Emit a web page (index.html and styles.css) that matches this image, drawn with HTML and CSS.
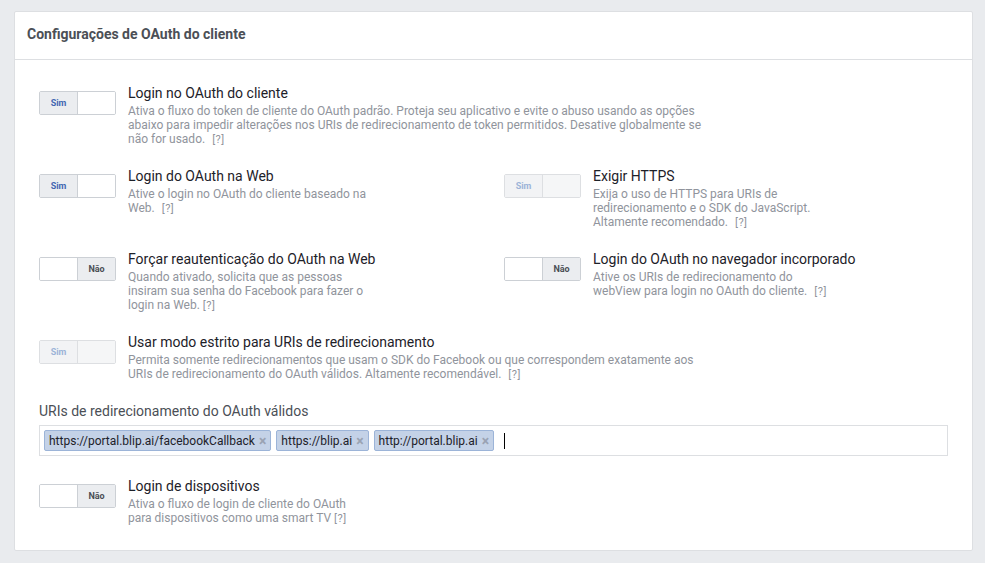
FILE: index.html
```html
<!DOCTYPE html>
<html lang="pt-BR">
<head>
<meta charset="utf-8">
<title>Configurações de OAuth do cliente</title>
<link rel="stylesheet" href="styles.css">
</head>
<body>
<div class="panel">
  <div class="panel-header">Configurações de OAuth do cliente</div>
  <div class="panel-body">
    <div class="row">
      <div class="setting wide">
        <div class="toggle"><span class="part on">Sim</span><span class="part blank"></span></div>
        <div class="info">
          <div class="title">Login no OAuth do cliente</div>
          <div class="desc">Ativa o fluxo do token de cliente do OAuth padrão. Proteja seu aplicativo e evite o abuso usando as opções abaixo para impedir alterações nos URIs de redirecionamento de token permitidos. Desative globalmente se não for usado. <span class="help">[?]</span></div>
        </div>
      </div>
    </div>
    <div class="row">
      <div class="setting">
        <div class="toggle"><span class="part on">Sim</span><span class="part blank"></span></div>
        <div class="info">
          <div class="title">Login do OAuth na Web</div>
          <div class="desc">Ative o login no OAuth do cliente baseado na Web. <span class="help">[?]</span></div>
        </div>
      </div>
      <div class="setting">
        <div class="toggle disabled"><span class="part on">Sim</span><span class="part blank"></span></div>
        <div class="info">
          <div class="title">Exigir HTTPS</div>
          <div class="desc">Exija o uso de HTTPS para URIs de redirecionamento e o SDK do JavaScript. Altamente recomendado. <span class="help">[?]</span></div>
        </div>
      </div>
    </div>
    <div class="row">
      <div class="setting">
        <div class="toggle"><span class="part blank"></span><span class="part off">Não</span></div>
        <div class="info">
          <div class="title">Forçar reautenticação do OAuth na Web</div>
          <div class="desc">Quando ativado, solicita que as pessoas insiram sua senha do Facebook para fazer o login na Web. <span class="help tight">[?]</span></div>
        </div>
      </div>
      <div class="setting">
        <div class="toggle"><span class="part blank"></span><span class="part off">Não</span></div>
        <div class="info">
          <div class="title">Login do OAuth no navegador incorporado</div>
          <div class="desc">Ative os URIs de redirecionamento do webView para login no OAuth do cliente. <span class="help">[?]</span></div>
        </div>
      </div>
    </div>
    <div class="row">
      <div class="setting wide">
        <div class="toggle disabled"><span class="part on">Sim</span><span class="part blank"></span></div>
        <div class="info">
          <div class="title">Usar modo estrito para URIs de redirecionamento</div>
          <div class="desc">Permita somente redirecionamentos que usam o SDK do Facebook ou que correspondem exatamente aos URIs de redirecionamento do OAuth válidos. Altamente recomendável. <span class="help">[?]</span></div>
        </div>
      </div>
    </div>
    <div class="uris">
      <div class="uris-label">URIs de redirecionamento do OAuth válidos</div>
      <div class="token-input">
        <span class="token">https://portal.blip.ai/facebookCallback<span class="x">×</span></span>
        <span class="token">https://blip.ai<span class="x">×</span></span>
        <span class="token">http://portal.blip.ai<span class="x">×</span></span>
        <span class="caret"></span>
      </div>
    </div>
    <div class="row last">
      <div class="setting">
        <div class="toggle"><span class="part blank"></span><span class="part off">Não</span></div>
        <div class="info">
          <div class="title">Login de dispositivos</div>
          <div class="desc">Ativa o fluxo de login de cliente do OAuth para dispositivos como uma smart TV <span class="help tight">[?]</span></div>
        </div>
      </div>
    </div>
  </div>
</div>
</body>
</html>
```
FILE: styles.css
```css
html, body {
  margin: 0;
  padding: 0;
  background: #e9ebee;
  font-family: Roboto, "Liberation Sans", sans-serif;
}

body {
  padding: 11px 12px 0 14px;
}

.panel {
  background: #fff;
  border: 1px solid #dddfe2;
  border-radius: 2px;
}

.panel-header {
  padding: 13px 12px 16px 12px;
  line-height: 18px;
  border-bottom: 1px solid #dddfe2;
  font-size: 14px;
  font-weight: 700;
  color: #4b4f56;
}

.panel-body {
  padding: 24px 24px 24px 24px;
}

.row {
  display: grid;
  grid-template-columns: 465px 1fr;
  margin-bottom: 20px;
}

.row.last {
  margin-bottom: 0;
}

.setting {
  display: flex;
  gap: 12px;
}

.setting.wide {
  grid-column: 1 / span 2;
}

.toggle {
  margin-top: 7px;
  width: 77px;
  height: 24px;
  box-sizing: border-box;
  border: 1px solid #ccd0d5;
  border-radius: 2px;
  display: flex;
  flex: none;
  overflow: hidden;
}

.part {
  flex: 1;
  display: flex;
  align-items: center;
  justify-content: center;
  font-size: 9px;
  font-weight: 700;
}

.part.on {
  background: #ebedf0;
  color: #4267b2;
  border-right: 1px solid #ccd0d5;
}

.part.off {
  background: #ebedf0;
  color: #4b4f56;
  border-left: 1px solid #ccd0d5;
}

.part.blank {
  background: #fff;
}

.toggle.disabled {
  border-color: #dddfe2;
}

.toggle.disabled .part.on {
  background: #f2f3f5;
  color: #9cb4d8;
  border-right-color: #dddfe2;
}

.toggle.disabled .part.blank {
  background: #f5f6f7;
}

.title {
  font-size: 14px;
  line-height: 18px;
  color: #1d2129;
  white-space: nowrap;
}

.desc {
  margin-top: 2px;
  font-size: 12px;
  line-height: 14px;
  color: #90949c;
  max-width: 240px;
}

.wide .desc {
  max-width: 585px;
}

.help {
  font-size: 11px;
  letter-spacing: 0.5px;
  margin-left: 4px;
}

.help.tight {
  margin-left: 0;
}

.uris {
  margin-top: 19px;
  margin-bottom: 21px;
}

.uris-label {
  font-size: 14px;
  line-height: 18px;
  color: #4b4f56;
  margin-bottom: 5px;
}

.token-input {
  border: 1px solid #dddfe2;
  height: 31px;
  box-sizing: border-box;
  padding: 4px;
  display: flex;
  align-items: center;
  gap: 5px;
}

.token {
  height: 21px;
  box-sizing: border-box;
  display: inline-flex;
  align-items: center;
  padding: 0 4px 0 4px;
  background: #c4d2e7;
  border: 1px solid #9cb4d8;
  border-radius: 2px;
  font-size: 12px;
  color: #1d2129;
}

.token .x {
  margin-left: 4px;
  color: #9aa3b3;
  font-size: 14px;
  font-weight: 700;
  line-height: 1;
}

.caret {
  width: 1px;
  height: 16px;
  background: #000;
  margin-left: 5px;
}
```
